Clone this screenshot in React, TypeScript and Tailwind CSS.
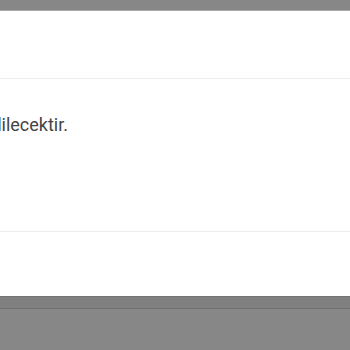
import React from 'react';

export default function App() {
  return (
    <div className="h-[350px] w-[350px] overflow-hidden bg-[#878787] font-['Roboto',sans-serif]">
      <div className="h-[11px] border-b border-[#a9a9a9]" />
      <div className="flex flex-col bg-white">
        <div className="h-[68px] border-b border-[#ececec]" />
        <div className="h-[153px] border-b border-[#ececec] pt-[34px]">
          <div className="flex w-[68px] justify-end">
            <p className="shrink-0 whitespace-nowrap text-[18px] leading-[24px] text-[#444]">
              İşleminiz onaylandıktan sonra kaydedilecektir.
            </p>
          </div>
        </div>
        <div className="h-[64px]" />
      </div>
      <div className="h-[13px] border-t border-[#747474] border-b border-b-[#6f6f6f] bg-[#808080]" />
    </div>
  );
}
